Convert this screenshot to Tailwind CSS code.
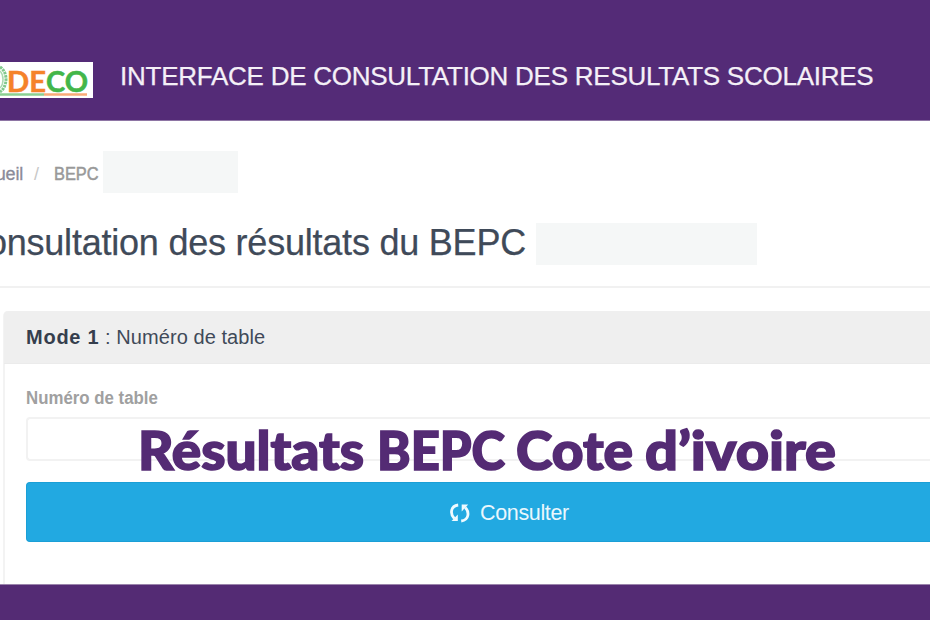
<!DOCTYPE html>
<html lang="fr">
<head>
<meta charset="utf-8">
<title>Résultats BEPC</title>
<script src="https://cdn.jsdelivr.net/npm/@tailwindcss/browser@4"></script>
</head>
<body class="w-[930px] h-[620px] overflow-hidden bg-white font-['Liberation_Sans',Arial,sans-serif] text-[#3f4a59]">
<div class="relative flex flex-col w-[930px] h-[620px] overflow-hidden">
  <header class="h-[121px] shrink-0 bg-[#542b77] border-b border-[#8e75a4] flex items-start pt-[62px]">
    <svg class="block shrink-0" width="93" height="36" viewBox="0 0 93 36">
      <rect width="93" height="36" fill="#fff"/>
      <path d="M0 5C8 10 8 24 0 30" fill="none" stroke="#80c98c" stroke-width="3" stroke-dasharray="2.5 .8"/>
      <path d="M0 9C4 13 4 22 0 26" fill="none" stroke="#a9dab1" stroke-width="1.5"/>
      <g font-family="Lato, sans-serif" font-weight="700" font-size="28" stroke-width=".5">
        <text x="7" y="30" fill="#f5822a" stroke="#f5822a" textLength="39" lengthAdjust="spacingAndGlyphs">DE</text>
        <text x="46" y="30" fill="#43b649" stroke="#43b649" textLength="42" lengthAdjust="spacingAndGlyphs">CO</text>
      </g>
      <path d="M0 32.5H44" stroke="#8bd092" stroke-width="2.5"/><path d="M44 32.5H87" stroke="#faab78" stroke-width="2.5"/>
    </svg>
    <div class="ml-[27px] -mt-px text-[26px] leading-[30px] text-[#f4f0f7] whitespace-nowrap tracking-[-0.25px] [-webkit-text-stroke:0.25px_#f4f0f7]">INTERFACE DE CONSULTATION DES RESULTATS SCOLAIRES</div>
  </header>
  <main class="h-[463px] shrink-0 flex flex-col overflow-hidden">
    <nav class="mt-[30px] h-[42px] shrink-0 flex items-center text-[18px] whitespace-nowrap">
      <div class="w-[23px] pt-[4px] flex justify-end text-[#8b8b99] tracking-[-0.2px] [-webkit-text-stroke:0.3px_#8b8b99]"><span>Accueil</span></div>
      <span class="ml-[11px] w-[20px] pt-[4px] text-[#c8c8c8]">/</span>
      <span class="w-[49px] pt-[4px]"><span class="inline-block origin-left scale-x-[0.91] text-[#999] [-webkit-text-stroke:0.5px_#999]">BEPC</span></span>
      <div class="w-[135px] h-[42px] bg-[#f5f7f7]"></div>
    </nav>
    <div class="mt-[30px] h-[42px] shrink-0 flex items-center whitespace-nowrap">
      <h1 class="w-[526px] flex justify-end text-[36px] leading-[40px] -mt-[2px] tracking-[-0.22px] [-webkit-text-stroke:0.25px_#3f4a59]"><span>Consultation des résultats du BEPC</span></h1>
      <div class="ml-[10px] w-[221px] h-[42px] bg-[#f5f7f7]"></div>
    </div>
    <div class="mt-[21px] h-[2px] shrink-0 bg-[#f1f1f1]"></div>
    <section class="mt-[23px] ml-[3px] grow border-l-2 border-[#f3f3f3] rounded-tl-[5px]">
      <div class="-ml-[1px] h-[53px] rounded-tl-[4px] bg-[#efefef] border-b border-[#ebebeb] pl-[22px] flex items-center text-[20px] whitespace-nowrap"><b class="text-[#353e4d] tracking-[0.75px]">Mode 1</b><span class="tracking-[0.07px]">&nbsp;: Numéro de table</span></div>
      <div class="pl-[21px]">
        <div class="pt-[22px] h-[53px] text-[18px] leading-[24px] font-bold text-[#a0a0a0] whitespace-nowrap"><span class="inline-block origin-left scale-x-[0.935]">Numéro de table</span></div>
        <div class="h-[44px] border-2 border-r-0 border-[#f2f2f2] rounded-l-[4px]"></div>
        <div class="mt-[21px] h-[60px] rounded-l-[4px] border border-r-0 border-[#1b9fd6] bg-[#22a9e1] flex items-center pl-[423px] pt-[2px] text-[21.5px] text-[#eaf7fd] whitespace-nowrap tracking-[-0.35px]">
          <svg class="block mr-[10px]" width="20" height="20" viewBox="0 0 20 20" fill="none" stroke="#effaff" stroke-width="2.8">
            <path d="M8.2 2C0 3 .2 11.5 4.3 15.5"/><path d="M1.5 18H7.8V11.5Z" fill="#effaff" stroke="none"/>
            <path d="M11.2 18C19.5 17 19.3 8.5 15.2 4.5"/><path d="M18.2 1.5H11.7V8.5Z" fill="#effaff" stroke="none"/>
          </svg><span>Consulter</span>
        </div>
      </div>
    </section>
  </main>
  <footer class="grow bg-[#542b74] border-t border-[#9b84ac]"></footer>
  <svg class="absolute left-[130px] top-[415px]" width="720" height="70" viewBox="130 415 720 70" fill="#542b74" stroke="#542b74" stroke-width="1.6" font-family="Lato, sans-serif" font-weight="900" font-size="53">
    <text x="138" y="470" textLength="226" lengthAdjust="spacingAndGlyphs">Résultats</text>
    <text x="377" y="470" textLength="128" lengthAdjust="spacingAndGlyphs">BEPC</text>
    <text x="516" y="470" textLength="117" lengthAdjust="spacingAndGlyphs">Cote</text>
    <text x="645" y="470" textLength="191" lengthAdjust="spacingAndGlyphs">d’ivoire</text>
  </svg>
</div>
</body>
</html>
